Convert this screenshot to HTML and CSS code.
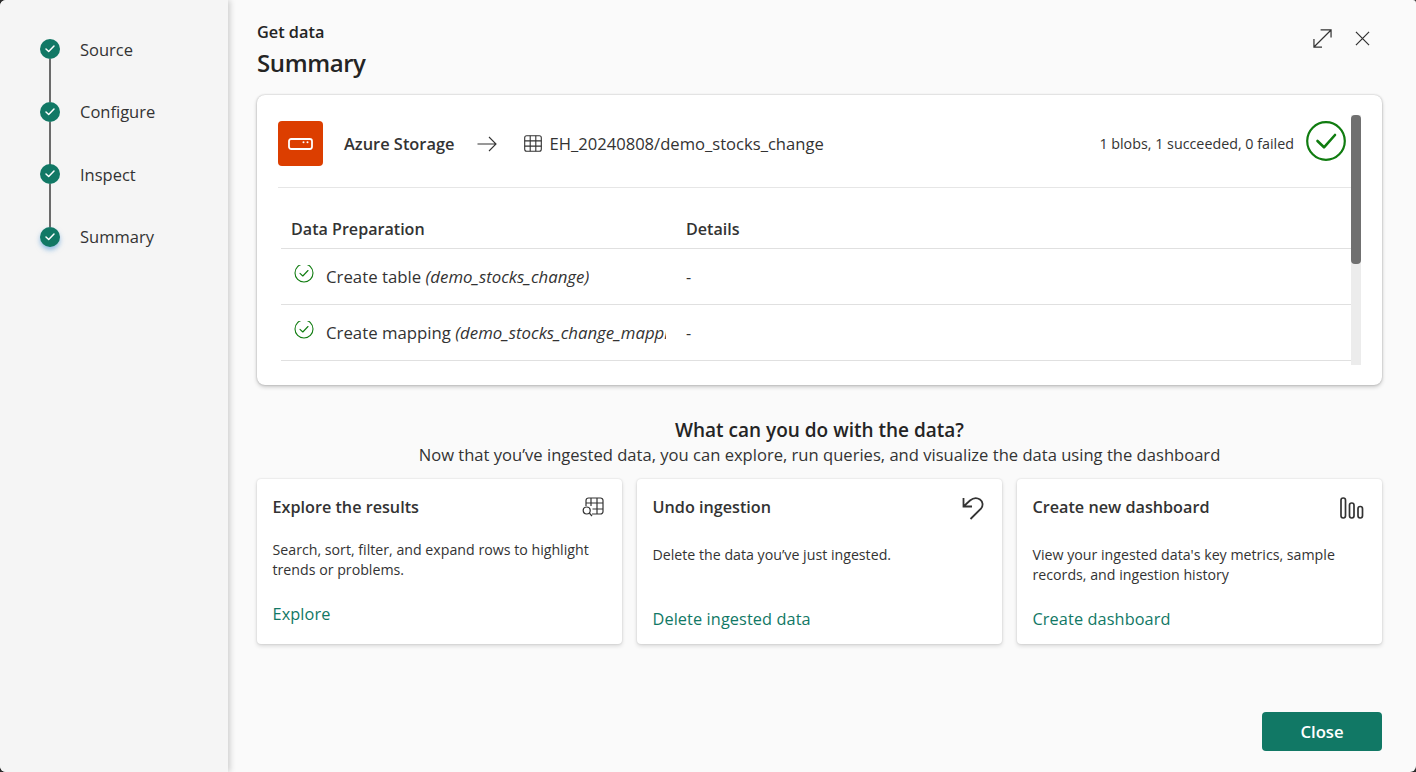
FILE: index.html
```html
<!DOCTYPE html>
<html lang="en">
<head>
<meta charset="utf-8">
<title>Get data - Summary</title>
<link rel="stylesheet" href="styles.css">
</head>
<body>
<div class="app">
  <aside class="sidebar">
    <ol class="steps">
      <li class="step"><span class="dot"><svg viewBox="0 0 20 20" class="dot-check"><path d="M6 10l2.700 2.500L14 7"/></svg></span><span class="step-label">Source</span></li>
      <li class="step"><span class="dot"><svg viewBox="0 0 20 20" class="dot-check"><path d="M6 10l2.700 2.500L14 7"/></svg></span><span class="step-label">Configure</span></li>
      <li class="step"><span class="dot"><svg viewBox="0 0 20 20" class="dot-check"><path d="M6 10l2.700 2.500L14 7"/></svg></span><span class="step-label">Inspect</span></li>
      <li class="step current"><span class="dot"><svg viewBox="0 0 20 20" class="dot-check"><path d="M6 10l2.700 2.500L14 7"/></svg></span><span class="step-label">Summary</span></li>
    </ol>
  </aside>
  <main class="main">
    <header class="head">
      <div class="titles">
        <div class="eyebrow">Get data</div>
        <h1 class="title">Summary</h1>
      </div>
      <div class="window-actions">
        <svg class="win-icon" viewBox="0 0 20 20"><path d="M1 10.500V19h8.500M19 9V1h-11M1 19L19 1"/></svg>
        <svg class="win-icon close" viewBox="0 0 16 16"><path d="M1 1l14 14M15 1L1 15"/></svg>
      </div>
    </header>

    <section class="panel">
      <div class="panel-body">
        <div class="panel-head">
          <span class="source-icon"><svg viewBox="0 0 25 12" class="source-svg"><rect x="1" y="1" width="23" height="10" rx="2.200"/><circle cx="15.500" cy="4.300" r="1"/><circle cx="19.500" cy="4.300" r="1"/></svg></span>
          <span class="source-name">Azure Storage</span>
          <svg class="arrow" viewBox="0 0 20 16"><path d="M0.500 8h18.500M12 1l7 7-7 7"/></svg>
          <svg class="table-icon" viewBox="0 0 18 17"><rect x="0.700" y="0.700" width="16.600" height="15.600" rx="2"/><path d="M6.200 .7v15.600M11.800 .7v15.600M.7 5.900h16.600M.7 11.100h16.600"/></svg>
          <span class="dest-name">EH_20240808/demo_stocks_change</span>
          <span class="status">1 blobs, 1 succeeded, 0 failed</span>
          <svg class="big-check" viewBox="0 0 40 40"><circle cx="20" cy="20" r="18.800"/><path class="big-tick" d="M11.500 20l6.500 6.300L29 14"/></svg>
        </div>
        <div class="table">
          <div class="row row-head"><div class="col-a">Data Preparation</div><div class="col-b">Details</div></div>
          <div class="row">
            <div class="col-a cell"><svg class="ok" viewBox="0 0 20 20"><circle cx="10" cy="10" r="9"/><path d="M6 10.300l2.800 2.700L14 7.500"/></svg><span class="cell-text">Create table <em>(demo_stocks_change)</em></span></div>
            <div class="col-b dash">-</div>
          </div>
          <div class="row">
            <div class="col-a cell"><svg class="ok" viewBox="0 0 20 20"><circle cx="10" cy="10" r="9"/><path d="M6 10.300l2.800 2.700L14 7.500"/></svg><span class="cell-text">Create mapping <em>(demo_stocks_change_mapping)</em></span></div>
            <div class="col-b dash">-</div>
          </div>
        </div>
      </div>
      <div class="scrollbar"><div class="thumb"></div></div>
    </section>

    <section class="next">
      <h2 class="next-title">What can you do with the data?</h2>
      <p class="next-sub">Now that you’ve ingested data, you can explore, run queries, and visualize the data using the dashboard</p>
    </section>

    <section class="cards">
      <article class="card">
        <div class="card-head"><h3 class="card-title">Explore the results</h3>
          <svg class="card-icon explore" viewBox="0 0 22 20"><path d="M4 9V3.500A2.500 2.500 0 0 1 6.500 1h12A2.500 2.500 0 0 1 21 3.500v11a2.500 2.500 0 0 1-2.500 2.500H10M9 1v8M15 1v16M4 6h17M10.500 12H21"/><circle cx="4.700" cy="13.500" r="3.500"/><path d="M7.300 16l2.700 3"/></svg>
        </div>
        <p class="card-text first">Search, sort, filter, and expand rows to highlight trends or problems.</p>
        <a class="card-link first-link">Explore</a>
      </article>
      <article class="card">
        <div class="card-head"><h3 class="card-title">Undo ingestion</h3>
          <svg class="card-icon undo" viewBox="0 0 24 26"><path d="M2.500 3v8.500H11M2.500 11.500L9 5.500c3-2.500 7-3 10-1 3 2.200 3.300 6 1.200 8.800L9.500 24"/></svg>
        </div>
        <p class="card-text">Delete the data you’ve just ingested.</p>
        <a class="card-link">Delete ingested data</a>
      </article>
      <article class="card">
        <div class="card-head"><h3 class="card-title">Create new dashboard</h3>
          <svg class="card-icon bars" viewBox="0 0 24 22"><rect x="1" y="1" width="4.500" height="20" rx="2.200"/><rect x="9.500" y="6" width="4.500" height="15" rx="2.200"/><rect x="18" y="9.500" width="4.500" height="11.500" rx="2.200"/></svg>
        </div>
        <p class="card-text">View your ingested data's key metrics, sample records, and ingestion history</p>
        <a class="card-link">Create dashboard</a>
      </article>
    </section>

    <footer class="foot"><button class="close-btn">Close</button></footer>
  </main>
</div>
</body>
</html>
```
FILE: styles.css
```css
* { box-sizing: border-box; }
html, body { margin: 0; height: 100%; }
body {
  background: #2b2b2b;
  font-family: "Open Sans", "Noto Sans", "Liberation Sans", sans-serif;
  color: #242424;
  overflow: hidden;
}
.app {
  display: flex;
  width: 1416px;
  height: 772px;
  border-radius: 6px 3px 6px 6px;
  overflow: hidden;
  background: #fafafa;
}
.sidebar {
  width: 228px;
  flex: none;
  background: #f5f5f5;
  box-shadow: 2px 0 6px rgba(0,0,0,.18);
  padding-top: 39px;
  position: relative;
}
.steps { list-style: none; margin: 0; padding: 0 0 0 40px; }
.step {
  position: relative;
  display: flex;
  align-items: center;
  height: 20px;
  margin-bottom: 42.670px;
  gap: 20px;
}
.step:not(:last-child)::after {
  content: "";
  position: absolute;
  left: 9px;
  top: 20px;
  width: 2px;
  height: 43px;
  background: #6b6b6b;
}
.dot {
  width: 20px;
  height: 20px;
  border-radius: 50%;
  background: #117865;
  flex: none;
  display: block;
}
.current .dot { box-shadow: 0 3px 5px rgba(60,140,210,.55); }
.dot-check { width: 20px; height: 20px; display: block; fill: none; stroke: #fff; stroke-width: 1.500; stroke-linecap: round; stroke-linejoin: round; }
.step-label { font-size: 16.500px; line-height: 22px; color: #333; padding-top: 1px; }

.main { flex: 1; display: flex; flex-direction: column; padding: 0 34px 21px 29px; min-width: 0; }
.head { display: flex; justify-content: space-between; height: 95px; flex: none; }
.titles { padding-top: 21px; }
.eyebrow { font-size: 16.300px; font-weight: 600; line-height: 22px; }
.title { margin: 0; font-size: 24px; font-weight: 600; line-height: 40px; letter-spacing: -.4px; }
.window-actions { display: flex; gap: 23px; padding: 29px 12px 0 0; align-items: flex-start; }
.win-icon { width: 19px; height: 19px; fill: none; stroke: #333; stroke-width: 1.300; display: block; }
.win-icon.close { width: 15px; height: 15px; margin-top: 2px; }

.panel {
  height: 290px;
  flex: none;
  background: #fff;
  border-radius: 8px;
  box-shadow: 0 0 2px rgba(0,0,0,.26), 0 2px 4px rgba(0,0,0,.2);
  display: flex;
  padding: 20px 21px 20px 21px;
}
.panel-body { flex: 1; min-width: 0; overflow: hidden; }
.panel-head {
  display: flex;
  align-items: center;
  height: 73px;
  padding: 6px 6px 21px 0;
  border-bottom: 1px solid #e6e6e6;
}
.source-icon { width: 45px; height: 45px; background: #dc3e00; border-radius: 4px; display: flex; align-items: center; justify-content: center; flex: none; }
.source-svg { width: 25px; height: 12px; fill: none; stroke: #fff; stroke-width: 1.800; }
.source-svg circle { fill: #fff; stroke: none; }
.source-name { margin-left: 21px; font-size: 16.400px; font-weight: 600; color: #333; }
.arrow { width: 20px; height: 16px; margin-left: 23px; fill: none; stroke: #333; stroke-width: 1.100; flex: none; }
.table-icon { width: 18px; height: 17px; margin-left: 27px; fill: none; stroke: #333; stroke-width: 1.100; flex: none; }
.dest-name { margin-left: 7px; font-size: 16.600px; color: #333; }
.status { margin-left: auto; font-size: 14.300px; color: #333; }
.big-check { width: 40px; height: 40px; margin: -6px 0 0 12px; fill: none; stroke: #107c10; stroke-width: 2.200; stroke-linecap: round; stroke-linejoin: round; flex: none; }
.big-tick { stroke-width: 2.600; }

.table { margin: 22px 0 0 3px; }
.row { display: flex; height: 56px; border-bottom: 1px solid #e0e0e0; align-items: center; }
.row-head { height: 39px; font-size: 16.100px; font-weight: 600; align-items: flex-start; padding-top: 8px; color: #333; }
.col-a { width: 385px; margin-right: 10px; padding-left: 10px; flex: none; white-space: nowrap; overflow: hidden; }
.col-b { padding-left: 10px; }
.cell { display: flex; align-items: center; padding-left: 13px; font-size: 16.800px; color: #333; }
.ok { width: 20px; height: 20px; fill: none; stroke: #107c10; stroke-width: 1.100; stroke-linecap: round; stroke-linejoin: round; flex: none; margin-top: -7px; }
.cell-text { margin-left: 12px; min-width: 0; overflow: hidden; }
.cell-text em { font-style: italic; }
.dash { font-size: 16px; color: #333; }

.scrollbar { width: 10px; flex: none; background: #ececec; margin-left: -1px; }
.thumb { height: 149px; background: #707070; border-radius: 4px; }

.next { text-align: center; padding-top: 32px; flex: none; }
.next-title { margin: 0; font-size: 19px; font-weight: 600; line-height: 26px; color: #242424; }
.next-sub { margin: 0; font-size: 16.580px; line-height: 24px; color: #333; }

.cards { display: flex; gap: 15px; margin-top: 12px; flex: none; }
.card {
  flex: 1;
  height: 165px;
  background: #fff;
  border-radius: 4px;
  box-shadow: 0 0 2px rgba(0,0,0,.14), 0 2px 4px rgba(0,0,0,.14);
  padding: 16px 16px 16px 15.500px;
  display: flex;
  flex-direction: column;
}
.card-head { display: flex; justify-content: space-between; align-items: flex-start; height: 24px; }
.card-title { margin: 0; font-size: 16.200px; font-weight: 600; line-height: 24px; color: #333; }
.card-icon { width: 22px; height: 20px; fill: none; stroke: #333; stroke-width: 1.200; flex: none; margin-top: 2px; }
.explore { margin-right: 2px; }
.undo { width: 24px; height: 26px; stroke-width: 1.800; margin-top: 0; margin-right: 1px; }
.bars { width: 24px; height: 22px; stroke-width: 1.700; margin-top: 2px; margin-right: 2px; }
.card-text { margin: 26px 0 0; font-size: 14.200px; line-height: 20px; color: #333; flex: 1; }
.card-text.first { margin-top: 21px; }
.card-link { font-size: 16.300px; line-height: 24px; color: #117865; margin-bottom: -3px; letter-spacing: .1px; }
.first-link { margin-bottom: 2px; }

.foot { margin-top: auto; display: flex; justify-content: flex-end; }
.close-btn {
  width: 120px;
  height: 39px;
  background: #117865;
  border: 0;
  border-radius: 4px;
  color: #fff;
  font-family: inherit;
  font-size: 16.700px;
  font-weight: 600;
}
```
